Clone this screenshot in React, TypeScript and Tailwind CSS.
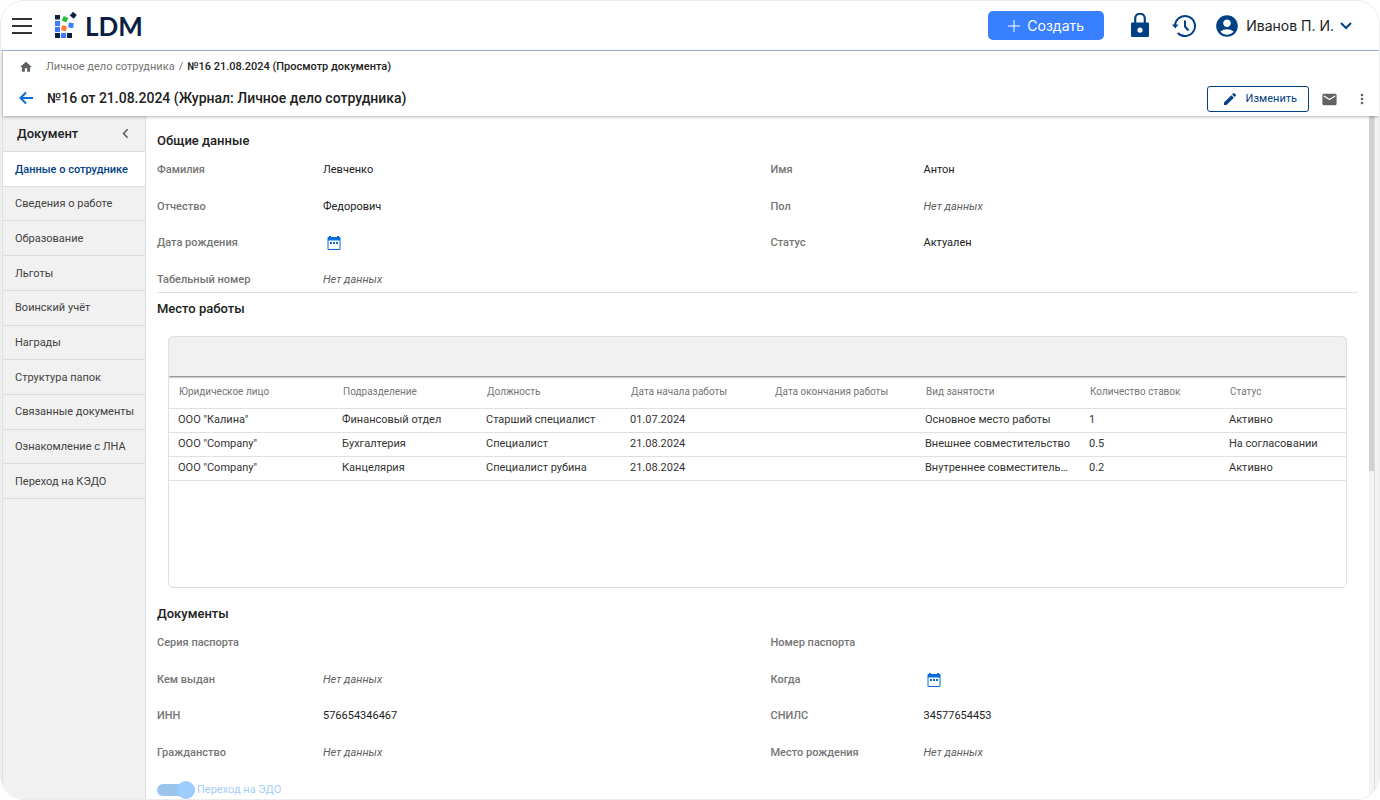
import React from "react";
import {
  MdHome,
  MdEdit,
  MdEmail,
  MdMoreVert,
  MdChevronLeft,
  MdAccountCircle,
} from "react-icons/md";

const navItems = [
  "Данные о сотруднике",
  "Сведения о работе",
  "Образование",
  "Льготы",
  "Воинский учёт",
  "Награды",
  "Структура папок",
  "Связанные документы",
  "Ознакомление с ЛНА",
  "Переход на КЭДО",
];

type FieldItem = { label: string; value?: string; empty?: boolean; date?: boolean };

const generalLeft: FieldItem[] = [
  { label: "Фамилия", value: "Левченко" },
  { label: "Отчество", value: "Федорович" },
  { label: "Дата рождения", date: true },
  { label: "Табельный номер", empty: true },
];
const generalRight: FieldItem[] = [
  { label: "Имя", value: "Антон" },
  { label: "Пол", empty: true },
  { label: "Статус", value: "Актуален" },
];
const docsLeft: FieldItem[] = [
  { label: "Серия паспорта" },
  { label: "Кем выдан", empty: true },
  { label: "ИНН", value: "576654346467" },
  { label: "Гражданство", empty: true },
];
const docsRight: FieldItem[] = [
  { label: "Номер паспорта" },
  { label: "Когда", date: true },
  { label: "СНИЛС", value: "34577654453" },
  { label: "Место рождения", empty: true },
];

const columns = [
  "Юридическое лицо",
  "Подразделение",
  "Должность",
  "Дата начала работы",
  "Дата окончания работы",
  "Вид занятости",
  "Количество ставок",
  "Статус",
];
const rows = [
  ['ООО "Калина"', "Финансовый отдел", "Старший специалист", "01.07.2024", "", "Основное место работы", "1", "Активно"],
  ['ООО "Company"', "Бухгалтерия", "Специалист", "21.08.2024", "", "Внешнее совместительство", "0.5", "На согласовании"],
  ['ООО "Company"', "Канцелярия", "Специалист рубина", "21.08.2024", "", "Внутреннее совместитель…", "0.2", "Активно"],
];

function Logo() {
  return (
    <a href="#" aria-label="LDM" className="flex items-center gap-[7px]">
      <svg width="24" height="27" viewBox="0 0 24 27" aria-hidden="true">
        <g fill="#0b1f45">
          <rect x="1" y="3" width="5" height="4.500" />
          <rect x="1" y="21" width="5" height="5" />
          <rect x="13" y="21" width="5" height="5" />
          <rect x="16.800" y="0.800" width="5" height="5" transform="rotate(40 19.300 3.300)" />
        </g>
        <g fill="#3b7cff">
          <rect x="1" y="9" width="5" height="5" />
          <rect x="1" y="15" width="5" height="5" />
          <rect x="7" y="21" width="5" height="5" />
          <rect x="14.500" y="10.800" width="5" height="5" transform="rotate(8 17 13.300)" />
        </g>
        <rect x="8.500" y="4.800" width="5" height="5" fill="#22c03c" transform="rotate(25 11 7.300)" />
        <rect x="7.500" y="13.800" width="5" height="5" fill="#ff7a30" transform="rotate(12 10 16.300)" />
      </svg>
      <span className="font-[Lato,sans-serif] text-[26px] leading-8 font-bold text-[#0b1f45]">LDM</span>
    </a>
  );
}

function LockIcon() {
  return (
    <svg width="18" height="25" viewBox="0 0 18 25" aria-hidden="true">
      <path d="M4.200 10V5.500a4.800 4.800 0 0 1 9.600 0V10" fill="none" stroke="#004085" strokeWidth="2.200" />
      <path fillRule="evenodd" d="M1 9.500h16a1 1 0 0 1 1 1V23a1 1 0 0 1-1 1H1a1 1 0 0 1-1-1V10.500a1 1 0 0 1 1-1ZM9 14.500a2.600 2.600 0 1 0 0 5.200 2.600 2.600 0 0 0 0-5.200Z" fill="#004085" />
    </svg>
  );
}

function HistoryIcon() {
  return (
    <svg width="24" height="24" viewBox="0 0 24 24" fill="none" stroke="#004085" strokeWidth="2" aria-hidden="true">
      <path d="M3 11.500A10 10 0 1 1 5.800 19" />
      <path d="M0 10.500h6.500L3.200 14.500Z" fill="#004085" stroke="none" />
      <path d="M13 6.500v6l3.500 4" />
    </svg>
  );
}

function BackIcon() {
  return (
    <svg width="18" height="18" viewBox="0 0 18 18" fill="none" stroke="#0a6bdc" strokeWidth="2" aria-hidden="true">
      <path d="M16 9H4M9 3.500 3.500 9 9 14.500" />
    </svg>
  );
}

function CalendarIcon() {
  return (
    <svg width="14" height="14" viewBox="0 0 14 14" fill="#0a6bdc" aria-hidden="true">
      <path fillRule="evenodd" d="M2 0h2v1h6V0h2v1h.5a1 1 0 0 1 1 1v11a1 1 0 0 1-1 1h-11a1 1 0 0 1-1-1V2a1 1 0 0 1 1-1H2ZM1.500 4.500V13h11V4.500Z" />
      <path d="M3 6h2v2H3ZM6 6h2v2H6ZM9 6h2v2H9Z" />
    </svg>
  );
}

function Fields({ items, wide }: { items: FieldItem[]; wide?: boolean }) {
  return (
    <dl className="grid h-[126px] grid-rows-[repeat(4,16px)] content-between">
      {items.map((f) => (
        <div key={f.label} className={`grid items-center leading-4 ${wide ? "grid-cols-[166px_1fr]" : "grid-cols-[153px_1fr]"}`}>
          <dt className="font-medium text-[#757575]">{f.label}</dt>
          <dd className={f.empty ? "text-[#616161] italic" : "text-[#212121]"}>
            {f.date ? (
              <button type="button" aria-label={`${f.label}: выбрать дату`} className="ml-1 block">
                <CalendarIcon />
              </button>
            ) : f.empty ? (
              "Нет данных"
            ) : (
              f.value
            )}
          </dd>
        </div>
      ))}
    </dl>
  );
}

export default function App() {
  return (
    <div className="h-screen bg-white font-[Roboto,sans-serif] text-[11px] text-[#212121]">
      <div className="flex h-full flex-col overflow-hidden rounded-3xl border border-[#ececec] bg-white">
        <header className="flex h-[50px] shrink-0 items-center border-b border-[#9db7d8] pr-[27px] pl-[11px]">
          <button type="button" aria-label="Меню" className="mr-[22px] flex w-5 flex-col gap-[5px]">
            <span className="h-[2px] bg-[#333]" />
            <span className="h-[2px] bg-[#333]" />
            <span className="h-[2px] bg-[#333]" />
          </button>
          <Logo />
          <button type="button" className="ml-auto flex h-[29px] w-[116px] items-center justify-center gap-[7px] rounded-[5px] bg-[#3880ff] font-[Inter,sans-serif] text-[14px] text-white">
            <svg width="12" height="12" viewBox="0 0 12 12" stroke="currentColor" aria-hidden="true">
              <path d="M6 0v12M0 6h12" />
            </svg>
            Создать
          </button>
          <button type="button" aria-label="Блокировка" className="ml-[27px]">
            <LockIcon />
          </button>
          <button type="button" aria-label="История" className="ml-[23px]">
            <HistoryIcon />
          </button>
          <button type="button" className="ml-[18px] flex items-center gap-[6px] font-[Inter,sans-serif] text-[14px] text-[#212121]">
            <MdAccountCircle size={26} color="#004085" />
            Иванов П. И.
            <svg width="12" height="8" viewBox="0 0 12 8" fill="none" stroke="#004085" strokeWidth="2" aria-hidden="true">
              <path d="M1 1l5 5 5-5" />
            </svg>
          </button>
        </header>

        <div className="flex min-h-0 flex-1 flex-col bg-[#f3f3f3] pl-px">
          <div className="flex min-h-0 flex-1 flex-col border-l border-[#dedede]">
            <div className="relative z-10 h-[65px] shrink-0 bg-white shadow-[0_1px_3px_rgba(0,0,0,0.3)]">
              <nav aria-label="Путь" className="flex h-8 items-center pl-4">
                <a href="#" aria-label="Главная" className="mr-[13px]">
                  <MdHome size={14} color="#616161" />
                </a>
                <a href="#" className="text-[#757575]">Личное дело сотрудника</a>
                <span className="mx-1 text-[#757575]">/</span>
                <span className="font-medium">№16 21.08.2024 (Просмотр документа)</span>
              </nav>
              <div className="flex h-8 items-center pr-[9px] pl-[14px]">
                <div className="flex items-center gap-3 pb-[2px]">
                  <a href="#" aria-label="Назад">
                    <BackIcon />
                  </a>
                  <h1 className="text-[14px] font-medium">№16 от 21.08.2024 (Журнал: Личное дело сотрудника)</h1>
                </div>
                <button type="button" className="ml-auto flex h-[26px] w-[102px] items-center justify-end gap-2 rounded-[3px] border border-[#004085] pr-[11px] text-[#004085]">
                  <MdEdit size={16} />
                  Изменить
                </button>
                <button type="button" aria-label="Отправить письмо" className="ml-3">
                  <MdEmail size={17} color="#616161" />
                </button>
                <button type="button" aria-label="Ещё" className="ml-4">
                  <MdMoreVert size={16} color="#616161" />
                </button>
              </div>
            </div>

            <div className="flex min-h-0 flex-1">
              <aside className="w-[143px] shrink-0 border-r border-[#dcdcdc] bg-[#f1f1f1]">
                <div className="flex h-9 items-center justify-between border-b border-[#dcdcdc] pr-[10px] pl-[14px]">
                  <h2 className="text-[13px] font-medium">Документ</h2>
                  <button type="button" aria-label="Свернуть">
                    <MdChevronLeft size={19} color="#616161" />
                  </button>
                </div>
                <nav aria-label="Разделы" className="grid h-[347px] auto-rows-fr">
                  {navItems.map((n, i) => (
                    <a
                      key={n}
                      href="#"
                      aria-current={i === 0 ? "page" : undefined}
                      className={`flex items-center border-b border-[#dcdcdc] pt-[2px] pl-3 whitespace-nowrap ${i === 0 ? "bg-white font-medium text-[#004085]" : "text-[#424242]"}`}
                    >
                      {n}
                    </a>
                  ))}
                </nav>
              </aside>

              <main className="min-w-0 flex-1 overflow-hidden bg-white pr-[11px] pl-[11px]">
                <h2 className="mt-[17px] mb-[13px] text-[13px] leading-4 font-medium">Общие данные</h2>
                <div className="grid grid-cols-[614fr_588fr]">
                  <Fields items={generalLeft} wide />
                  <Fields items={generalRight} />
                </div>
                <hr className="mt-1 border-[#e0e0e0]" />
                <h2 className="mt-2 text-[13px] leading-4 font-medium">Место работы</h2>
                <div className="mx-[11px] mt-[19px] h-[252px] overflow-hidden rounded-[5px] border border-[#e0e0e0]">
                  <div className="h-[39px] bg-[#f1f1f1] shadow-[0_1px_2px_rgba(0,0,0,0.6)]" />
                  <table className="w-full table-fixed border-collapse text-left">
                    <colgroup>
                      <col className="w-[164px]" />
                      <col className="w-36" />
                      <col className="w-36" />
                      <col className="w-36" />
                      <col className="w-[151px]" />
                      <col className="w-[164px]" />
                      <col className="w-[140px]" />
                      <col />
                    </colgroup>
                    <thead>
                      <tr className="h-8 border-b border-[#e0e0e0] text-[10px] text-[#757575]">
                        {columns.map((c) => (
                          <th key={c} scope="col" className="pl-[10px] font-normal whitespace-nowrap">{c}</th>
                        ))}
                      </tr>
                    </thead>
                    <tbody className="text-[#333]">
                      {rows.map((r, i) => (
                        <tr key={i} className="h-6 border-b border-[#e0e0e0]">
                          {r.map((c, j) => (
                            <td key={j} className="truncate pr-[10px] pl-[9px]">{c}</td>
                          ))}
                        </tr>
                      ))}
                    </tbody>
                  </table>
                </div>
                <h2 className="mt-[18px] mb-[13px] text-[13px] leading-4 font-medium">Документы</h2>
                <div className="grid grid-cols-[614fr_588fr]">
                  <Fields items={docsLeft} wide />
                  <Fields items={docsRight} />
                </div>
                <label className="mt-5 flex items-center text-[#a5cdf5]">
                  <span className="relative mr-[2px] flex h-[18px] w-[38px] items-center">
                    <input type="checkbox" defaultChecked className="h-3 w-[38px] appearance-none rounded-full bg-[#9bc4ec]" />
                    <span className="absolute right-0 size-[18px] rounded-full bg-[#9dcdff]" />
                  </span>
                  Переход на ЭДО
                </label>
              </main>
              <div className="mr-1 w-[6px] shrink-0 border-r border-[#dcdcdc] bg-[#f3f3f3]">
                <div className="h-[52%] bg-[#d0d0d0]" />
              </div>
            </div>
          </div>
        </div>
      </div>
    </div>
  );
}
